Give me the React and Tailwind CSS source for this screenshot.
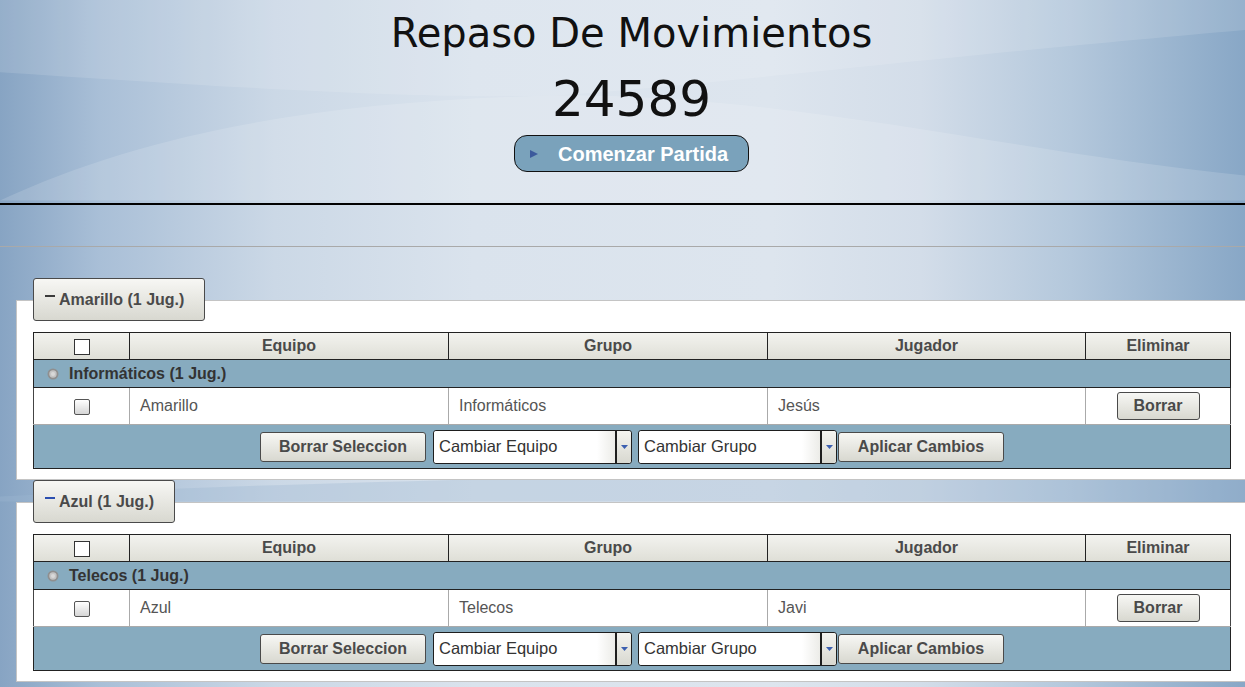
import React from 'react';

const teams = [
  { name: 'Amarillo', group: 'Informáticos', player: 'Jesús', dash: 'bg-[#3a3a3a]' },
  { name: 'Azul', group: 'Telecos', player: 'Javi', dash: 'bg-[#2c4fb0]' },
];

const grayBtn =
  'rounded-[3px] border border-[#4a4a4a] bg-linear-to-b from-[#f7f7f4] to-[#d8d8d0] font-bold text-[#4a4a4a] text-[16px] leading-none';

function Checkbox({ header }) {
  if (header) {
    return <span className="inline-block h-[16px] w-[16px] border border-[#333] bg-white align-middle" />;
  }
  return (
    <span className="inline-block h-[16px] w-[16px] rounded-[2px] border border-[#555] bg-linear-to-b from-white to-[#d6d6d6] align-middle" />
  );
}

function FakeSelect({ label }) {
  return (
    <div className="flex h-[34px] w-[199px] rounded-[3px] border border-[#1e1e1e] bg-white">
      <div className="flex flex-1 items-center rounded-l-[3px] bg-linear-to-r from-white from-[90%] to-[#ececE8] pl-[5px] text-[16.5px] text-[#333]">
        {label}
      </div>
      <div className="flex w-[16px] items-center justify-center rounded-r-[3px] border-l-2 border-[#1e1e1e] bg-linear-to-b from-[#f4f4f0] to-[#d8d8d0]">
        <svg width="7" height="4" viewBox="0 0 7 4">
          <path d="M0 0h7L3.5 4z" fill="#3b5fb0" />
        </svg>
      </div>
    </div>
  );
}

function TeamPanel({ team }) {
  return (
    <section>
      <div className={`relative z-10 ml-[33px] inline-flex h-[43px] items-center pl-[11px] pr-[20px] ${grayBtn}`}>
        <span className={`mr-[4px] -mt-[8px] h-[2px] w-[10px] ${team.dash}`} />
        <span>{team.name} (1 Jug.)</span>
      </div>
      <div className="-mt-[21px] ml-[16px] border-y border-l border-[#c4c4c4] bg-white pb-[10px] pl-[16px] pr-[15px] pt-[31px]">
        <table className="w-full table-fixed border-collapse text-[16px]">
          <colgroup>
            <col className="w-[96px]" />
            <col className="w-[319px]" />
            <col className="w-[319px]" />
            <col className="w-[318px]" />
            <col className="w-[145px]" />
          </colgroup>
          <thead>
            <tr className="h-[27px] bg-linear-to-b from-[#f3f3ef] to-[#deded6] font-bold text-[#4a4a4a]">
              <th className="border border-[#222] p-0 text-center">
                <Checkbox header />
              </th>
              <th className="border border-[#222] p-0">Equipo</th>
              <th className="border border-[#222] p-0">Grupo</th>
              <th className="border border-[#222] p-0">Jugador</th>
              <th className="border border-[#222] p-0">Eliminar</th>
            </tr>
          </thead>
          <tbody>
            <tr className="h-[28px] bg-[#87abbf]">
              <td colSpan={5} className="border border-[#222] p-0 pl-[13px]">
                <div className="flex items-center font-bold text-[#333]">
                  <svg width="12" height="12" viewBox="0 0 12 12" className="mr-[10px] shrink-0">
                    <circle cx="6" cy="6" r="4.6" fill="#c4c4c4" stroke="#8f8f8f" strokeWidth="1.8" />
                    <circle cx="6" cy="6" r="2" fill="#d8d8d8" />
                  </svg>
                  {team.group} (1 Jug.)
                </div>
              </td>
            </tr>
            <tr className="h-[37px] bg-white text-[#555]">
              <td className="border-y border-l border-r border-[#aaa] border-l-[#444] p-0 text-center">
                <Checkbox />
              </td>
              <td className="border border-[#aaa] p-0 pl-[10px]">{team.name}</td>
              <td className="border border-[#aaa] p-0 pl-[10px]">{team.group}</td>
              <td className="border border-[#aaa] p-0 pl-[10px]">{team.player}</td>
              <td className="border border-[#aaa] border-r-[#444] p-0 text-center">
                <button className={`h-[28px] w-[83px] ${grayBtn}`}>Borrar</button>
              </td>
            </tr>
            <tr className="h-[44px] bg-[#87abbf]">
              <td colSpan={5} className="rounded-b-[3px] border border-[#222] p-0">
                <div className="flex items-center justify-center">
                  <button className={`h-[30px] w-[166px] ${grayBtn}`}>Borrar Seleccion</button>
                  <div className="ml-[7px]">
                    <FakeSelect label="Cambiar Equipo" />
                  </div>
                  <div className="ml-[6px]">
                    <FakeSelect label="Cambiar Grupo" />
                  </div>
                  <button className={`ml-[1px] h-[30px] w-[166px] ${grayBtn}`}>Aplicar Cambios</button>
                </div>
              </td>
            </tr>
          </tbody>
        </table>
      </div>
    </section>
  );
}

export default function App() {
  return (
    <div className="relative min-h-screen overflow-hidden bg-[linear-gradient(90deg,#87a4c3_0%,#a9bfd7_8%,#cbd8e6_22%,#dae3ed_38%,#dde5ee_62%,#d3dde9_74%,#b4c8dc_86%,#88a7c6_100%)] pb-[7px] font-['Liberation_Sans',Arial,sans-serif]">
      {/* soft wave decoration behind the content */}
      <svg className="pointer-events-none absolute inset-0 h-full w-full" viewBox="0 0 1245 687" preserveAspectRatio="none">
        <path d="M0 72 C200 85 420 100 560 95 C760 80 900 60 1245 30 L1245 0 L0 0 Z" fill="#ffffff" opacity="0.12" />
        <path d="M0 200 C150 130 330 100 560 95 C800 95 1000 150 1245 175 L1245 200 Z" fill="#ffffff" opacity="0.14" />
        <path d="M0 495 C300 480 700 470 1245 470 L1245 500 L0 500 Z" fill="#9fb8d2" opacity="0.35" />
      </svg>

      <div className="relative">
        <div className="pl-[18px]">
          <h1 className="mt-[9px] text-center font-['DejaVu_Sans',Verdana,sans-serif] text-[40px] font-normal leading-[48px] text-[#111]">
            Repaso De Movimientos
          </h1>
          <div className="mt-[12px] text-center font-['DejaVu_Sans',Verdana,sans-serif] text-[50px] leading-[60px] text-[#111]">
            24589
          </div>
          <div className="mt-[6px] flex justify-center">
            <button className="flex h-[37px] w-[235px] items-center rounded-[13px] border border-[#111] bg-[#7aa2bb] pl-[15px] text-[20px] font-bold text-white">
              <svg width="8" height="8" viewBox="0 0 8 8" className="mr-[20px]">
                <path d="M0 0L8 4L0 8z" fill="#3c5a9c" />
              </svg>
              Comenzar Partida
            </button>
          </div>
        </div>
        <div className="mt-[31px] h-[2px] bg-black" />
        <div className="mt-[41px] h-px bg-[#a9a9a9]" />

        <div className="mt-[31px]">
          <TeamPanel team={teams[0]} />
          <TeamPanel team={teams[1]} />
        </div>
      </div>
    </div>
  );
}
